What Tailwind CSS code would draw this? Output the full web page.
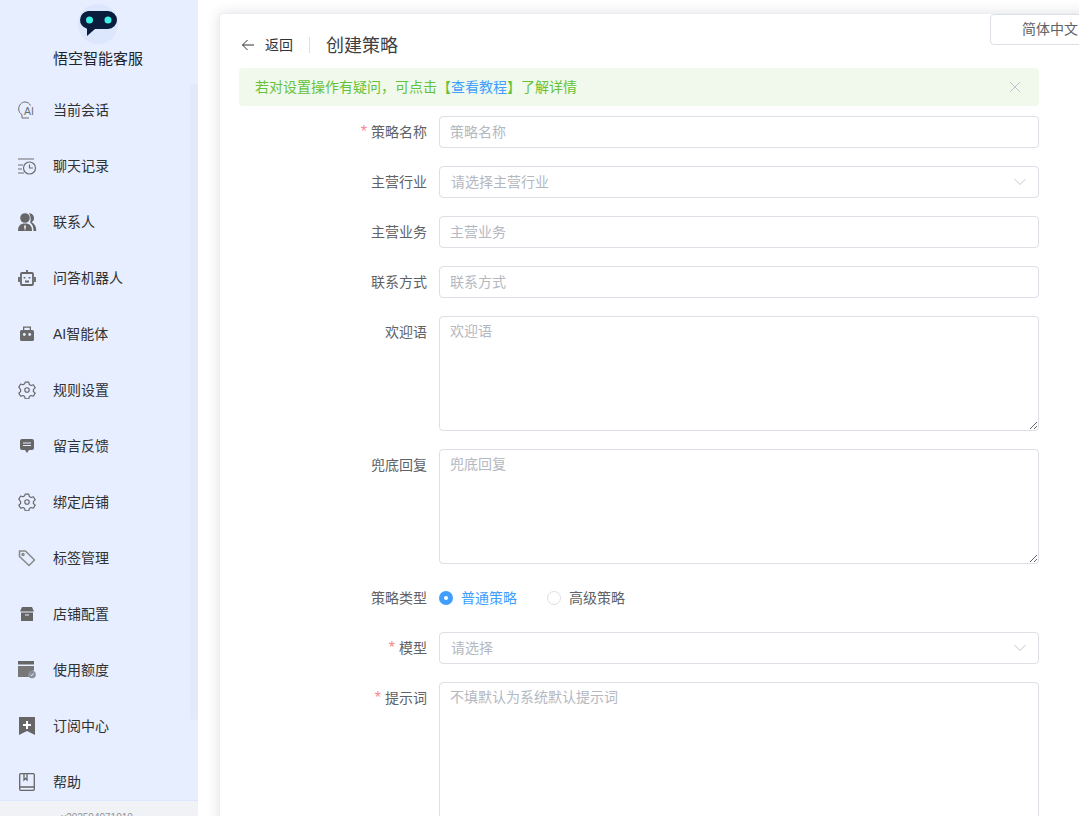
<!DOCTYPE html>
<html lang="zh-CN">
<head>
<meta charset="UTF-8">
<title>创建策略</title>
<script src="https://cdn.jsdelivr.net/npm/@tailwindcss/browser@4"></script>
</head>
<body class="h-[816px] w-[1079px] overflow-hidden bg-white font-['Liberation_Sans','Noto_Sans_CJK_SC',sans-serif] text-[14px] text-[#303133]">
<div class="flex h-[816px] w-[1079px]">
  <!-- sidebar -->
  <aside class="relative flex h-full w-[198px] shrink-0 flex-col overflow-hidden bg-[#e6eeff]">
    <div class="flex h-[82px] shrink-0 flex-col items-center pr-[2px] pt-1">
      <div class="flex h-10 w-10 items-center justify-center rounded-full bg-[#dce6fd]">
        <svg width="38" height="28" viewBox="0 0 38 28"><path d="M9 1h20a9 9 0 0 1 0 18H16l-8 7v-7.300A9 9 0 0 1 9 1z" fill="#0a1d3d"/><circle cx="10.500" cy="10" r="3.500" fill="#3ef0e6"/><circle cx="29" cy="10" r="3.500" fill="#3ef0e6"/></svg>
      </div>
      <div class="mt-[5px] text-[15px] leading-[20px] text-[#20242c]">悟空智能客服</div>
    </div>
    <nav class="flex flex-col">
      <a class="flex h-14 items-center"><span class="flex w-[53px] justify-center pl-[1px]"><svg width="18" height="18" viewBox="0 0 18 18" fill="none" stroke="#6e6e6e" stroke-width="1"><path d="M4 17v-3.500C1.800 12.500.7 10.500.7 8c0-3.800 2.800-7 6.300-7 2.500 0 4.500 1.300 5.500 3.500"/><path d="M4 17h7"/><text x="6" y="14" font-size="10.500" fill="#6e6e6e" stroke="none" font-family="Liberation Sans">AI</text></svg></span><span>当前会话</span></a>
      <a class="flex h-14 items-center"><span class="flex w-[53px] justify-center"><svg width="20" height="20" viewBox="0 0 20 20" fill="none" stroke="#6e6e6e" stroke-width="1.200"><path d="M1 3h16M1 9h5M1 13h4M1 17h6"/><circle cx="12.500" cy="12" r="6"/><path d="M12.500 8.500V12h3.500"/></svg></span><span>聊天记录</span></a>
      <a class="flex h-14 items-center"><span class="flex w-[53px] justify-center"><svg width="20" height="20" viewBox="0 0 20 20" fill="#666"><circle cx="8" cy="6" r="4.800"/><path d="M1 19c0-5 2-7.500 7-7.500s7 2.500 7 7.500z"/><path d="M8 12.500l-1 2 1 4.500 1-4.500z" fill="#e6eeff"/><path d="M12 1.200a4.800 4.800 0 0 1 2.500 9c3 1.500 4.800 4 4.800 8.800h-2.800c0-4-1-7-3.500-8.500 1-2 1-6.300-1-9.300z"/></svg></span><span>联系人</span></a>
      <a class="flex h-14 items-center"><span class="flex w-[53px] justify-center"><svg width="18" height="18" viewBox="0 0 18 18" fill="none" stroke="#666" stroke-width="1.800"><rect x="3" y="4" width="12" height="12" rx="1"/><path d="M9 1v3M1 8v5M17 8v5M6.500 8v1.500M11.500 8v1.500M7 12.500h4"/></svg></span><span>问答机器人</span></a>
      <a class="flex h-14 items-center"><span class="flex w-[53px] justify-center"><svg width="16" height="16" viewBox="0 0 16 16" fill="#6a6a6a"><path d="M4 .5h8V4h-1.300V1.800H5.300V4H4z"/><rect x="1" y="4" width="14" height="11" rx="1.500"/><circle cx="5.300" cy="8.500" r="1.400" fill="#e6eeff"/><circle cx="10.700" cy="8.500" r="1.400" fill="#e6eeff"/></svg></span><span>AI智能体</span></a>
      <a class="flex h-14 items-center"><span class="flex w-[53px] justify-center"><svg width="18" height="18" viewBox="0 0 24 24" fill="none" stroke="#666" stroke-width="1.500" stroke-linejoin="round"><path d="M9.600 1.500h4.800l.7 3.200 2.300 1.300 3.100-1 2.400 4.200-2.400 2.200v2.600l2.400 2.200-2.400 4.200-3.100-1-2.300 1.300-.7 3.200H9.600l-.7-3.200-2.300-1.300-3.100 1-2.400-4.200 2.400-2.200v-2.600L1.100 8.200l2.400-4.200 3.100 1 2.300-1.300z"/><circle cx="12" cy="12" r="3"/></svg></span><span>规则设置</span></a>
      <a class="flex h-14 items-center"><span class="flex w-[53px] justify-center"><svg width="14" height="14" viewBox="0 0 14 14"><path d="M2 0h10a2 2 0 0 1 2 2v7a2 2 0 0 1-2 2H9l-2 3-2-3H2a2 2 0 0 1-2-2V2a2 2 0 0 1 2-2z" fill="#666"/><path d="M3 3.500h8v1H3zM3 6h8v1H3z" fill="#e6eeff"/></svg></span><span>留言反馈</span></a>
      <a class="flex h-14 items-center"><span class="flex w-[53px] justify-center"><svg width="18" height="18" viewBox="0 0 24 24" fill="none" stroke="#666" stroke-width="1.500" stroke-linejoin="round"><path d="M9.600 1.500h4.800l.7 3.200 2.300 1.300 3.100-1 2.400 4.200-2.400 2.200v2.600l2.400 2.200-2.400 4.200-3.100-1-2.300 1.300-.7 3.200H9.600l-.7-3.200-2.300-1.300-3.100 1-2.400-4.200 2.400-2.200v-2.600L1.100 8.200l2.400-4.200 3.100 1 2.300-1.300z"/><circle cx="12" cy="12" r="3"/></svg></span><span>绑定店铺</span></a>
      <a class="flex h-14 items-center"><span class="flex w-[53px] justify-center"><svg width="18" height="18" viewBox="0 0 18 18" fill="none" stroke="#888" stroke-width="1.500" stroke-linejoin="round"><path d="M1.500 2h6l9 9-5.500 5.500-9.500-9z"/><circle cx="5" cy="5.500" r="1"/></svg></span><span>标签管理</span></a>
      <a class="flex h-14 items-center"><span class="flex w-[53px] justify-center"><svg width="14" height="14" viewBox="0 0 14 14" fill="#666"><path d="M2 0h10l2 4.500H0z"/><path d="M1 5.500h12V14H1zM5 7.500v1h4v-1z" fill-rule="evenodd"/></svg></span><span>店铺配置</span></a>
      <a class="flex h-14 items-center"><span class="flex w-[53px] justify-center"><svg width="18" height="18" viewBox="0 0 18 18"><path d="M0 0h16v3.500H0z" fill="#666"/><path d="M0 5h16v4.500a5 5 0 0 0-5 6.500H0z" fill="#777"/><circle cx="14" cy="13.500" r="3.800" fill="#8a8f99"/><path d="M12.300 13.500l1.300 1.300 2-2.300" stroke="#e6eeff" fill="none"/></svg></span><span>使用额度</span></a>
      <a class="flex h-14 items-center"><span class="flex w-[53px] justify-center"><svg width="16" height="18" viewBox="0 0 16 18"><path d="M0 0h16v18l-8-4-8 4z" fill="#666"/><path d="M7 4h2v3h3v2H9v3H7V9H4V7h3z" fill="#fff"/></svg></span><span>订阅中心</span></a>
      <a class="flex h-14 items-center"><span class="flex w-[53px] justify-center"><svg width="16" height="18" viewBox="0 0 16 18" fill="none" stroke="#666" stroke-width="1.300"><rect x=".7" y=".7" width="14.600" height="16.600" rx="1"/><path d="M5 1v6l1.500-1.500L8 7V1M1 14h14"/></svg></span><span>帮助</span></a>
    </nav>
    <div class="absolute right-0 top-[84px] h-[636px] w-2 rounded bg-[#e1e9fa]"></div>
    <div class="absolute inset-x-0 bottom-0 h-4 overflow-hidden border-t border-[#dbe6ff] bg-[#f0f2f5] pr-[4px] pt-[11px] text-center text-[10px] leading-[12px] text-[#909399]">v202504071010</div>
  </aside>

  <!-- main -->
  <main class="min-w-0 flex-1 pl-[21px] pt-[13px]">
    <div class="relative h-[900px] w-[900px] rounded-t-[4px] border-t border-l border-[#ebeef5] bg-white pl-[19px] pt-[15px] shadow-[0_0_14px_rgba(0,0,0,0.12)]">
      <button class="absolute left-[770px] top-0 flex h-[31px] w-[120px] items-start rounded-[4px] border border-[#dcdfe6] bg-white pl-[31px] pt-[4px] text-[14px] leading-[20px] text-[#606266]">简体中文</button>

      <div class="flex h-[32px] w-[800px] items-center">
        <svg width="14" height="14" viewBox="0 0 14 14" fill="none" stroke="#303133" stroke-width="1" class="ml-[2px]"><path d="M13 7H1.500M6.500 2l-5 5 5 5"/></svg>
        <span class="ml-[10px] text-[14px] text-[#303133]">返回</span>
        <span class="mx-4 h-4 w-px bg-[#dcdfe6]"></span>
        <span class="mt-[2px] text-[18px] text-[#3c3e42]">创建策略</span>
      </div>

      <div class="mt-[7px] flex h-[38px] w-[800px] items-center justify-between rounded-[4px] bg-[#f0f9eb] pl-4 pr-[18px] text-[14px] text-[#67c23a]">
        <span>若对设置操作有疑问，可点击【<span class="text-[#409eff]">查看教程</span>】了解详情</span>
        <svg width="12" height="12" viewBox="0 0 12 12" fill="none" stroke="#c0c4cc" stroke-width="1"><path d="M1 1l10 10M11 1L1 11"/></svg>
      </div>

      <form class="mt-[10px] flex w-[800px] flex-col gap-[18px] text-[#606266]">
        <div class="flex items-center"><label class="w-[188px] text-right"><span class="mr-1 text-[16px] leading-none text-[#f78989]">*</span>策略名称</label><input class="ml-3 h-8 w-[600px] rounded-[4px] border border-[#dcdfe6] px-[10px] text-[14px] outline-none placeholder:text-[#b4b8bf]" placeholder="策略名称"></div>
        <div class="flex items-center"><label class="w-[188px] text-right">主营行业</label><div class="ml-3 flex h-8 w-[600px] items-center justify-between rounded-[4px] border border-[#dcdfe6] pl-[11px] pr-[12px] text-[#b4b8bf]"><span>请选择主营行业</span><svg width="12" height="8" viewBox="0 0 12 8" fill="none" stroke="#c0c4cc"><path d="M.5 1l5.500 5.500L11.500 1"/></svg></div></div>
        <div class="flex items-center"><label class="w-[188px] text-right">主营业务</label><input class="ml-3 h-8 w-[600px] rounded-[4px] border border-[#dcdfe6] px-[10px] text-[14px] outline-none placeholder:text-[#b4b8bf]" placeholder="主营业务"></div>
        <div class="flex items-center"><label class="w-[188px] text-right">联系方式</label><input class="ml-3 h-8 w-[600px] rounded-[4px] border border-[#dcdfe6] px-[10px] text-[14px] outline-none placeholder:text-[#b4b8bf]" placeholder="联系方式"></div>
        <div class="flex items-start"><label class="w-[188px] pt-[5px] text-right leading-[22px]">欢迎语</label><textarea class="ml-3 block h-[115px] w-[600px] rounded-[4px] border border-[#dcdfe6] px-[10px] py-[4px] text-[14px] leading-[20px] outline-none placeholder:text-[#b4b8bf]" placeholder="欢迎语"></textarea></div>
        <div class="flex items-start"><label class="w-[188px] pt-[5px] text-right leading-[22px]">兜底回复</label><textarea class="ml-3 block h-[115px] w-[600px] rounded-[4px] border border-[#dcdfe6] px-[10px] py-[4px] text-[14px] leading-[20px] outline-none placeholder:text-[#b4b8bf]" placeholder="兜底回复"></textarea></div>
        <div class="flex h-[32px] items-center"><label class="w-[188px] text-right">策略类型</label>
          <span class="ml-3 flex h-[14px] w-[14px] items-center justify-center rounded-full bg-[#409eff]"><span class="h-1 w-1 rounded-full bg-white"></span></span><span class="ml-2 text-[#409eff]">普通策略</span>
          <span class="ml-[30px] h-[14px] w-[14px] rounded-full border border-[#dcdfe6]"></span><span class="ml-2">高级策略</span>
        </div>
        <div class="flex items-center"><label class="w-[188px] text-right"><span class="mr-1 text-[16px] leading-none text-[#f78989]">*</span>模型</label><div class="ml-3 flex h-8 w-[600px] items-center justify-between rounded-[4px] border border-[#dcdfe6] pl-[11px] pr-[12px] text-[#b4b8bf]"><span>请选择</span><svg width="12" height="8" viewBox="0 0 12 8" fill="none" stroke="#c0c4cc"><path d="M.5 1l5.500 5.500L11.500 1"/></svg></div></div>
        <div class="flex items-start"><label class="w-[188px] pt-[5px] text-right leading-[22px]"><span class="mr-1 text-[16px] leading-none text-[#f78989]">*</span>提示词</label><textarea class="ml-3 block h-[200px] w-[600px] rounded-[4px] border border-[#dcdfe6] px-[10px] py-[4px] text-[14px] leading-[20px] outline-none placeholder:text-[#b4b8bf]" placeholder="不填默认为系统默认提示词"></textarea></div>
      </form>
    </div>
  </main>
</div>
</body>
</html>
